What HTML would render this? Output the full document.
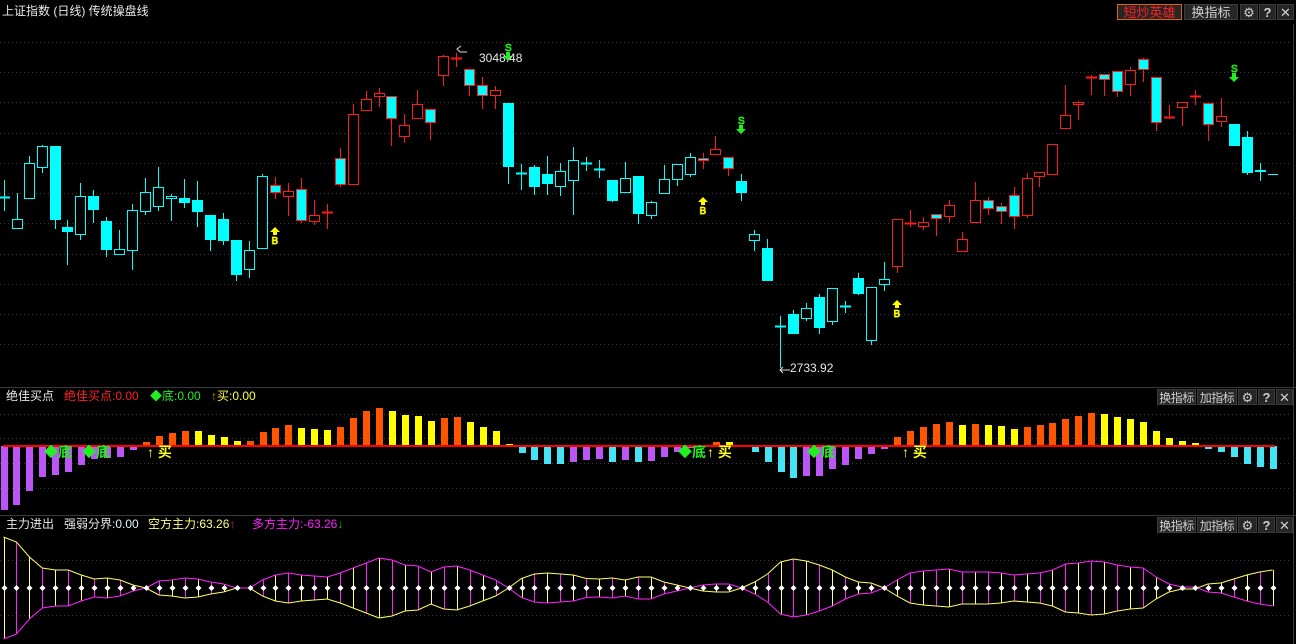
<!DOCTYPE html>
<html><head><meta charset="utf-8">
<style>
html,body{margin:0;padding:0;background:#000;overflow:hidden;}
#wrap{position:relative;width:1296px;height:644px;background:#000;font-family:"Liberation Sans","Noto Sans CJK SC",sans-serif;font-size:12px;}
svg{position:absolute;left:0;top:0;}
.t{position:absolute;white-space:nowrap;line-height:14px;}
.btn{position:absolute;height:16px;line-height:16px;background:#262626;border:1px solid #3c3c3c;color:#cfcfcf;text-align:center;font-size:13px;box-sizing:border-box;white-space:nowrap;overflow:hidden;}
.sm{font-size:12px;letter-spacing:-0.5px;}
</style></head><body><div id="wrap">
<svg id="s" width="1296" height="644" xmlns="http://www.w3.org/2000/svg"></svg>

<div class="t" style="left:2px;top:4px;color:#e8e8e8;">上证指数 (日线) 传统操盘线</div>
<div class="btn" style="left:1117px;top:4px;width:65px;border-color:#e06020;color:#ff2020;">短炒英雄</div>
<div class="btn" style="left:1184px;top:4px;width:54px;">换指标</div>
<div class="btn" style="left:1240px;top:4px;width:18px;">⚙</div>
<div class="btn" style="left:1259px;top:4px;width:17px;font-weight:bold;">?</div>
<div class="btn" style="left:1277px;top:4px;width:17px;">✕</div>

<div class="t" style="left:6px;top:389px;color:#e8e8e8;">绝佳买点</div>
<div class="t" style="left:64px;top:389px;color:#ff2020;">绝佳买点:0.00</div>
<div class="t" style="left:150px;top:389px;color:#22ee22;">◆底:0.00</div>
<div class="t" style="left:211px;top:389px;color:#ffff40;"><span style="color:#c8a000">↑</span>买:0.00</div>
<div class="btn sm" style="left:1157px;top:389px;width:39px;">换指标</div>
<div class="btn sm" style="left:1197px;top:389px;width:40px;">加指标</div>
<div class="btn" style="left:1238px;top:389px;width:19px;">⚙</div>
<div class="btn" style="left:1258px;top:389px;width:17px;font-weight:bold;">?</div>
<div class="btn" style="left:1276px;top:389px;width:17px;">✕</div>

<div class="t" style="left:6px;top:517px;color:#e8e8e8;">主力进出</div>
<div class="t" style="left:64px;top:517px;color:#e8e8e8;">强弱分界:<span style="color:#e0f4ff">0.00</span></div>
<div class="t" style="left:148px;top:517px;color:#ffff80;">空方主力:63.26<span style="color:#e02020">↑</span></div>
<div class="t" style="left:252px;top:517px;color:#ff20ff;">多方主力:-63.26<span style="color:#10c010">↓</span></div>
<div class="btn sm" style="left:1157px;top:517px;width:39px;">换指标</div>
<div class="btn sm" style="left:1197px;top:517px;width:40px;">加指标</div>
<div class="btn" style="left:1238px;top:517px;width:19px;">⚙</div>
<div class="btn" style="left:1258px;top:517px;width:17px;font-weight:bold;">?</div>
<div class="btn" style="left:1276px;top:517px;width:17px;">✕</div>

<div class="t" style="left:479px;top:51px;color:#e8e8e8;">3048.48</div>
<div class="t" style="left:790px;top:361px;color:#e8e8e8;">2733.92</div>

<div class="t" style="left:44px;top:445px;color:#22ee22;font-size:14px;font-weight:bold;">◆底</div>
<div class="t" style="left:82px;top:445px;color:#22ee22;font-size:14px;font-weight:bold;">◆底</div>
<div class="t" style="left:147px;top:445px;color:#ffff20;font-size:14px;font-weight:bold;">↑ 买</div>
<div class="t" style="left:678px;top:445px;color:#22ee22;font-size:14px;font-weight:bold;">◆底</div>
<div class="t" style="left:707px;top:445px;color:#ffff20;font-size:14px;font-weight:bold;">↑ 买</div>
<div class="t" style="left:807px;top:445px;color:#22ee22;font-size:14px;font-weight:bold;">◆底</div>
<div class="t" style="left:902px;top:445px;color:#ffff20;font-size:14px;font-weight:bold;">↑ 买</div>
</div>
<script>
var S=document.getElementById('s'),o='';
function L(x1,y1,x2,y2,c,w,extra){o+='<line x1="'+x1+'" y1="'+y1+'" x2="'+x2+'" y2="'+y2+'" stroke="'+c+'" stroke-width="'+(w||1)+'" '+(extra||'')+'/>';}
function R(x,y,w,h,f,s){o+='<rect x="'+x+'" y="'+y+'" width="'+w+'" height="'+h+'" fill="'+f+'"'+(s?' stroke="'+s+'" stroke-width="1"':'')+'/>';}
[42,72,102,133,163,193,223,254,284,314,344].forEach(function(y){L(0,y+.5,1290,y+.5,'#3a3a3a',1,'stroke-dasharray="1 3"');});
[414,438,463,488].forEach(function(y){L(0,y+.5,1290,y+.5,'#3a3a3a',1,'stroke-dasharray="1 3"');});
[560,615].forEach(function(y){L(0,y+.5,1290,y+.5,'#3a3a3a',1,'stroke-dasharray="1 3"');});
L(0,387.5,1296,387.5,'#3a3a3a');L(0,515.5,1296,515.5,'#3a3a3a');
L(1293.5,24,1293.5,644,'#3a3a3a');
var C=[[3.5,197,197,180,211,'c'],[16.7,219,229,193,229,'h'],[29,163,199,156,199,'h'],[42,146,168,145,173,'h'],[55,146,220,146,229,'c'],[67,227,232,220,265,'c'],[80,196,235,183,240,'h'],[93,196,210,190,223,'c'],[106,221,250,217,257,'c'],[119,249,255,230,255,'h'],[132,210,251,204,270,'h'],[145,192,212,178,215,'h'],[158,187,207,167,211,'h'],[171,196,199,194,221,'h'],[184,198,203,179,208,'c'],[197,200,212,181,227,'c'],[210,215,240,215,251,'c'],[223,219,241,213,245,'c'],[236,240,275,240,281,'c'],[249,250,270,241,278,'h'],[262,176,249,174,249,'h'],[275,185,193,177,199,'rc'],[288,191,197,183,216,'r'],[301,189,221,178,223,'rc'],[314,215,222,200,225,'r'],[327,212,212,204,229,'r'],[340,158,185,148,187,'rc'],[353,114,185,104,185,'r'],[366,99,111,91,111,'r'],[379,93,97,88,107,'r'],[391,96,119,96,146,'rc'],[404,125,137,114,143,'r'],[417,104,119,90,119,'r'],[430,109,123,109,140,'rc'],[443,56,76,55,86,'r'],[456,58,58,53,67,'r'],[469,69,86,69,96,'rc'],[482,85,96,77,109,'rc'],[495,90,96,86,109,'r'],[508,103,167,103,184,'c'],[521,173,173,164,190,'h'],[534,167,187,165,195,'c'],[547,174,184,156,195,'c'],[560,171,187,163,196,'h'],[573,160,181,147,215,'h'],[586,163,163,157,171,'h'],[599,169,169,160,178,'h'],[612,180,201,180,202,'c'],[625,178,193,162,193,'h'],[638,176,214,176,224,'c'],[651,202,216,201,219,'h'],[664,179,194,165,194,'h'],[677,164,180,164,186,'h'],[690,157,175,153,177,'h'],[703,158,161,153,169,'rc'],[715,149,155,136,155,'r'],[728,157,169,157,176,'rc'],[741,181,193,174,201,'c'],[754,234,241,230,251,'h'],[767,248,281,239,281,'c'],[780,326,326,316,368,'h'],[793,314,334,310,334,'c'],[806,308,319,303,321,'h'],[819,297,328,294,334,'c'],[832,288,322,288,325,'h'],[845,306,306,301,313,'h'],[858,278,294,273,295,'c'],[871,287,341,287,345,'h'],[884,279,285,262,291,'h'],[897,219,267,219,273,'r'],[910,223,223,210,227,'r'],[923,222,227,217,230,'r'],[936,214,219,214,236,'rc'],[949,205,217,200,223,'r'],[962,239,252,232,252,'r'],[975,200,223,182,223,'r'],[988,200,209,197,215,'rc'],[1001,206,212,203,224,'rc'],[1014,195,217,187,229,'rc'],[1027,178,216,173,218,'r'],[1039,172,177,172,187,'r'],[1052,144,175,144,175,'r'],[1065,115,129,85,129,'r'],[1078,102,105,101,120,'r'],[1091,77,77,75,95,'r'],[1104,74,80,74,96,'rc'],[1117,71,92,71,97,'rc'],[1130,70,85,67,96,'r'],[1143,59,70,58,82,'rc'],[1156,77,123,77,131,'rc'],[1169,117,117,105,119,'r'],[1182,102,108,102,126,'r'],[1195,96,96,90,105,'r'],[1208,103,125,103,141,'rc'],[1221,116,122,98,127,'r'],[1234,124,146,124,146,'c'],[1247,137,173,131,175,'c'],[1260,170,172,163,181,'h']];
var CY='#00ffff',RD='#ff1a1a';
C.forEach(function(k){var x=Math.round(k[0]),t=k[1],b=k[2],h=k[3],l=k[4],ty=k[5];var col=(ty=='r'||ty=='rc')?RD:CY;var cx=x+.5;
 if(h<t)L(cx,h,cx,t,col);if(l>b)L(cx,b,cx,l,col);
 if(b-t<1){L(x-5,t+.5,x+6,t+.5,col,2);return;}
 if(ty=='c')R(x-5,t,11,b-t,CY);
 else if(ty=='h')R(x-4.5,t+.5,10,b-t-1,'#000',CY);
 else if(ty=='r')R(x-4.5,t+.5,10,b-t-1,'#000',RD);
 else {R(x-5,t,11,b-t,CY);R(x-4.5,t+.5,10,b-t-1,'none',RD);}
});
L(1268,174.5,1278,174.5,CY);
function B(x,y){o+='<polygon points="'+(x)+','+y+' '+(x+5)+','+(y+5)+' '+(x+2)+','+(y+5)+' '+(x+2)+','+(y+8)+' '+(x-2)+','+(y+8)+' '+(x-2)+','+(y+5)+' '+(x-5)+','+(y+5)+'" fill="#ffff00"/>';o+='<text x="'+(x-3.5)+'" y="'+(y+17)+'" fill="none" stroke="#ffff00" stroke-width="0.8" font-family="Liberation Sans" font-size="10">B</text>';}
B(275,227);B(703,197);B(897,300);
function Sm(x,y){o+='<text x="'+(x-3)+'" y="'+(y+9)+'" fill="none" stroke="#22ee22" stroke-width="0.8" font-family="Liberation Sans" font-size="10">S</text>';o+='<polygon points="'+(x-2)+','+(y+10)+' '+(x+2)+','+(y+10)+' '+(x+2)+','+(y+14)+' '+(x+5)+','+(y+14)+' '+x+','+(y+19)+' '+(x-5)+','+(y+14)+' '+(x-2)+','+(y+14)+'" fill="#22ee22"/>';}
Sm(508,42);Sm(741,115);Sm(1234,63);
o+='<path d="M461,46 L457,49 L460,52 L467,52" stroke="#ddd" fill="none"/>';
o+='<path d="M783,367 L780,370 L783,373 M780,370 L790,370" stroke="#ddd" fill="none"/>';
var H=[-64,-59,-45,-31,-29,-26,-19,-13,-12,-11,-4,4,10,13,15,15,11,9,5,5,14,18,21,18,17,16,19,28,35,38,35,31,30,25,28,29,24,19,15,2,-7,-14,-18,-18,-16,-14,-13,-16,-14,-16,-15,-11,-6,-2,0,4,4,0,-6,-16,-26,-32,-30,-30,-23,-19,-13,-8,-3,9,15,19,22,24,21,22,21,20,17,19,21,23,27,30,33,32,29,27,24,15,8,5,3,-3,-6,-11,-18,-21,-23];
var HC='ppppppppppp'+'ooooyyyyooooyyyooooyyyyooyyyy'+'ccccpppcpcp'+'ppp'+'xoyx'+'cccc'+'ppppppp'+'ooooo'+'yoyyy'+'oooooo'+'yyyyyyyy'+'cccccc';
var PU='#bb55f5',OR='#ff5500',YE='#ffff00',CB='#44e4f4';
var BL=446;
for(var i=0;i<H.length;i++){var x=Math.round(3.5+12.95*i)-3,v=H[i];if(!v)continue;var c;
 if(v>0){c=(HC[i]=='y')?YE:OR;R(x,BL-v,7,v,c);}else{c=(HC[i]=='c')?CB:PU;R(x,BL,7,-v,c);}}
R(3,445,1272,2,'#ff0000');
var A=[51,46,31,20,18,18,13,9,10,8,3,0,-7,-8,-10,-9,-6,-4,0,0,-8,-13,-15,-13,-12,-11,-15,-20,-25,-30,-28,-23,-22,-16,-21,-22,-18,-13,-8,0,9.5,14,15,14,13,9.5,9,10,8,11,11,6,3,0,-3,-4,-4,0,6,14,26,29,27,23,18,11,6,5,0,-8,-15,-17,-18,-19,-16,-16,-16,-15,-13,-14,-15,-18,-24,-25,-27,-26,-23,-21,-20,-11,-4,-1,-1,4,5,9,13,16,18];
var CT=588,py='',pm='';
for(i=0;i<A.length;i++){var x=(3.5+12.95*i).toFixed(1);py+=(i?'L':'M')+x+','+(CT-A[i]);pm+=(i?'L':'M')+x+','+(CT+A[i]);}
for(i=0;i<A.length;i++){var x=Math.round(3.5+12.95*i)+.5,a=A[i];if(Math.abs(a)>1){var up=a>0?'#ffff66':'#ff22ff',dn=a>0?'#ff22ff':'#ffff66';
 L(x,CT-Math.abs(a),x,CT+Math.abs(a),i%2==0?up:dn);}}
o+='<path d="'+py+'" stroke="#ffff66" fill="none"/>';o+='<path d="'+pm+'" stroke="#ff22ff" fill="none"/>';
for(i=0;i<A.length;i++){var x=Math.round(3.5+12.95*i)+.5;o+='<polygon points="'+x+','+(CT-3)+' '+(x+3)+','+CT+' '+x+','+(CT+3)+' '+(x-3)+','+CT+'" fill="#fff"/>';}
S.innerHTML=o;
</script>
</body></html>
